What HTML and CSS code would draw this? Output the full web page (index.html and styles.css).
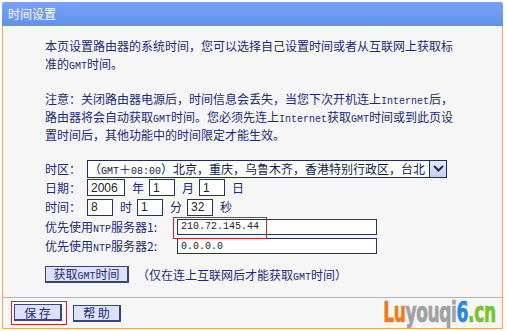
FILE: index.html
```html
<!DOCTYPE html>
<html lang="zh-CN">
<head>
    <meta charset="UTF-8">
    <title>时间设置</title>
    <link rel="stylesheet" href="styles.css">
</head>
<body>

<div class="panel">
    <div class="panel-title">时间设置</div>

    <div class="panel-body">
        <p class="note">本页设置路由器的系统时间，您可以选择自己设置时间或者从互联网上获取标<br>准的<span class="en">GMT</span>时间。</p>
        <p class="note">注意：关闭路由器电源后，时间信息会丢失，当您下次开机连上<span class="en">Internet</span>后，<br>路由器将会自动获取<span class="en">GMT</span>时间。您必须先连上<span class="en">Internet</span>获取<span class="en">GMT</span>时间或到此页设<br>置时间后，其他功能中的时间限定才能生效。</p>

        <div class="form">
            <div class="row row-zone">
                <span class="label">时区：</span>
                <div class="select">
                    <span class="select-text">（<span class="en">GMT</span>＋<span class="en">08:00</span>）北京，重庆，乌鲁木齐，香港特别行政区，台北</span>
                    <span class="select-arrow">
                        <svg width="11" height="7" viewBox="0 0 11 7"><path d="M1 1 L5.5 5.5 L10 1" fill="none" stroke="#1d2a5e" stroke-width="2"/></svg>
                    </span>
                </div>
            </div>
            <div class="row">
                <span class="label">日期：</span>
                <input class="field w-year" type="text" value="2006">
                <span class="unit">年</span>
                <input class="field w-small" type="text" value="1">
                <span class="unit">月</span>
                <input class="field w-small" type="text" value="1">
                <span class="unit">日</span>
            </div>
            <div class="row">
                <span class="label">时间：</span>
                <input class="field w-small" type="text" value="8">
                <span class="unit">时</span>
                <input class="field w-small" type="text" value="1">
                <span class="unit">分</span>
                <input class="field w-small" type="text" value="32">
                <span class="unit">秒</span>
            </div>
            <div class="row">
                <span class="label label-wide">优先使用<span class="en">NTP</span>服务器1:</span>
                <div class="ntp">
                    <input class="field w-ntp en-field" type="text" value="210.72.145.44">
                    <span class="mark mark-ntp"></span>
                </div>
            </div>
            <div class="row">
                <span class="label label-wide">优先使用<span class="en">NTP</span>服务器2:</span>
                <input class="field w-ntp en-field" type="text" value="0.0.0.0">
            </div>
            <div class="row row-sync">
                <button class="btn btn-sync" type="button">获取<span class="en">GMT</span>时间</button>
                <span class="hint">（仅在连上互联网后才能获取<span class="en">GMT</span>时间）</span>
            </div>
        </div>
    </div>

    <div class="panel-foot">
        <div class="marked">
            <button class="btn btn-foot" type="button">保 存</button>
        </div>
        <button class="btn btn-foot" type="button">帮 助</button>
        <div class="logo"><span class="lo-a">Lu</span><span class="lo-b">youqi</span><span class="lo-c">6</span><span class="lo-d">.cn</span></div>
    </div>
</div>

</body>
</html>
```

FILE: styles.css
```css
body {
    margin: 0;
    padding: 2px 4px 0 2px;
    background: #ffffff;
    font-family: "Noto Sans CJK SC", "DejaVu Sans", sans-serif;
    font-size: 12px;
    line-height: 18px;
    color: #1b2b74;
}
.panel {
    width: 501px;
}
.panel-title {
    height: 24px;
    line-height: 23px;
    padding-left: 6px;
    background: linear-gradient(#78a3f5, #6091ea);
    color: #ffffff;
    font-size: 12px;
    border-radius: 2px 2px 0 0;
}
.panel-body {
    background: #f6f6f7;
    border-left: 1px solid #f0a65c;
    border-right: 1px solid #f0a65c;
    padding: 11px 0 14px 42px;
}
.note {
    margin: 0 0 17px;
    line-height: 18px;
    white-space: nowrap;
}
.en {
    font-family: "Liberation Mono", "DejaVu Sans Mono", monospace;
    font-size: 10px;
    line-height: 1;
}
.form {
    display: flex;
    flex-direction: column;
}
.row {
    display: flex;
    align-items: center;
    height: 19.5px;
    white-space: nowrap;
}
.row-zone {
    height: 19px;
    margin-top: -2px;
}
.label {
    width: 42px;
    flex-shrink: 0;
}
.label-wide {
    width: 132px;
}
.select {
    display: flex;
    align-items: center;
    width: 360px;
    height: 18px;
    box-sizing: border-box;
    border: 1px solid #1f2c5e;
    background: #ffffff;
}
.select-text {
    flex: 1;
    padding-left: 1px;
    white-space: nowrap;
    overflow: hidden;
    color: #111a44;
}
.select-arrow {
    display: flex;
    align-items: center;
    justify-content: center;
    width: 17px;
    height: 16px;
    box-sizing: border-box;
    border-left: 1px solid #1f2c5e;
    background: linear-gradient(#e4ebfb, #c2cff0);
}
.field {
    height: 17px;
    box-sizing: border-box;
    margin: 0;
    padding: 0 3px;
    border: 1px solid #26335f;
    background: #ffffff;
    font-family: "Liberation Sans", Arial, sans-serif;
    font-size: 12px;
    color: #222222;
    outline: none;
}
.en-field {
    font-family: "Liberation Mono", "DejaVu Sans Mono", monospace;
    font-size: 10px;
    height: 16px;
}
.w-year {
    width: 38px;
}
.w-small {
    width: 26px;
}
.w-ntp {
    width: 200px;
}
.unit {
    margin: 0 5px 0 7px;
}
.ntp {
    position: relative;
    display: flex;
}
.mark {
    position: absolute;
    border: 1px solid #c8262e;
    pointer-events: none;
}
.mark-ntp {
    left: -4px;
    top: -2px;
    width: 92px;
    height: 20px;
}
.row-sync {
    height: 17px;
    margin-top: 10px;
}
.btn {
    height: 17px;
    margin: 0;
    padding: 0 6px;
    box-sizing: border-box;
    border: 1px solid #3a4476;
    border-right-width: 2px;
    border-bottom-width: 2px;
    background: #dde1fa;
    font-family: "Noto Sans CJK SC", sans-serif;
    font-size: 12px;
    line-height: 13px;
    color: #1b2b74;
}
.btn-sync {
    width: 84px;
    padding: 0;
}
.hint {
    margin-left: 8px;
}
.panel-foot {
    position: relative;
    display: flex;
    align-items: center;
    gap: 12px;
    height: 30px;
    padding-left: 12px;
    background: #f6f6f7;
    border: 1px solid #f0a65c;
}
.marked {
    display: flex;
    padding: 2px 4px 3px 2px;
    border: 1px solid #c8262e;
    margin-left: -4px;
    margin-right: -6px;
}
.btn-foot {
    width: 48px;
    height: 17px;
}
.logo {
    position: absolute;
    right: 6px;
    top: 1px;
    font-family: "DejaVu Sans Condensed", "DejaVu Sans", sans-serif;
    font-weight: bold;
    font-size: 27px;
    line-height: 27px;
    letter-spacing: -0.5px;
    -webkit-text-stroke: 0.7px;
    transform: scale(0.7, 1.05);
    transform-origin: right center;
}
.lo-a {
    color: #f07b18;
}
.lo-b {
    color: #a0a0a0;
}
.lo-c {
    color: #2b87e2;
}
.lo-d {
    color: #78c42a;
}
```
